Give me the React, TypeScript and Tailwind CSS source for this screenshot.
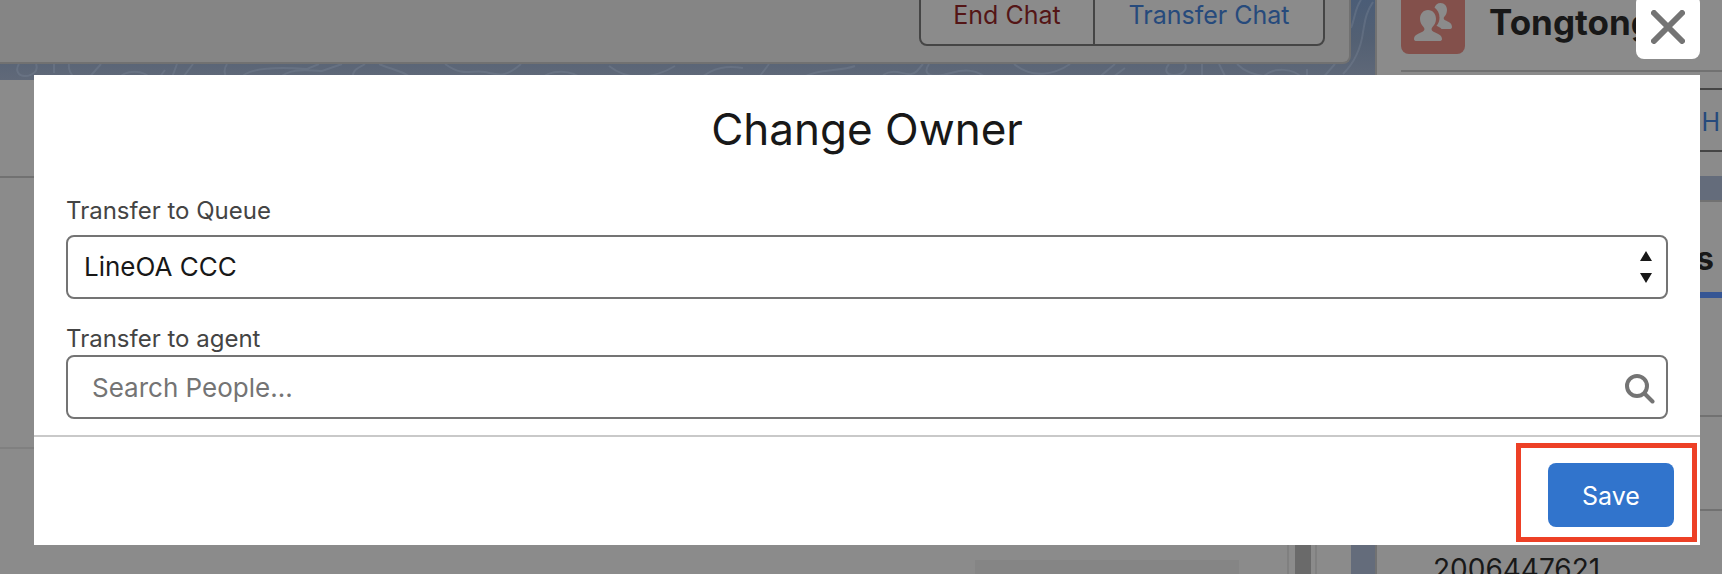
import React from "react";

function Contours() {
  return (
    <svg
      className="absolute inset-0 h-full w-full"
      viewBox="0 0 1376 80"
      preserveAspectRatio="xMaxYMin slice"
      fill="none"
      stroke="#7b8697"
      strokeOpacity="0.35"
      strokeWidth="2"
      aria-hidden="true"
    >
      <path d="M20 64c-4 6-1 12 6 12s14-5 11-12M55 64v9M70 64c-1 6 2 10 6 15M88 80l14-16M118 80c8-11 27-11 35 0M160 78l6-8M172 80l6-16M182 80l12-16M228 64c-4 6-3 11 1 16M240 80c6-11 30-14 68-11l12-5M278 80c12-12 27-10 45-9l20-7M355 80c-4-10 5-12 11-16M380 64c14 6 28 8 34 16" />
      <path d="M446 64c20 14 26 5 40 8s20 6 36-8M540 80c12-12 34-10 44 0M610 66c20 16 46 12 66 0M700 80c14-14 30-14 44-12M770 64l-12 16M800 80c16-12 40-8 56-14" />
      <path d="M884 75c14-9 26 5 34-4l6-7M930 64c-8 12 4 14 22 9 14-4 26-4 38 7M1015 64c18 15 40 11 56 0M1098 79l18-15M1110 80l16-12M1170 64c-5 6-3 11 5 11s14-5 11-11M1203 64v12M1220 64l6 12M1238 64c12 12 24 10 40 16M1265 76c10-9 30-8 38 2M1308 69v10M1322 80l14-16" />
      <path d="M1374 2c-8 12-8 20-10 30-2 16-8 30-20 42M1362 0c-6 8-6 18-10 28" />
    </svg>
  );
}

function PeopleIcon() {
  return (
    <svg viewBox="0 0 64 64" className="h-16 w-16" fill="#8b8b8b" aria-hidden="true">
      <path d="M27 20c5 0 8 4 8 9 0 3-1.500 6-3.500 8-1.500 1.700-1.200 3.800 1 4.700 4.500 2 8.500 3.300 8.500 7.300 0 1.500-1 2-2.500 2h-23c-1.500 0-2.500-.5-2.500-2 0-4 4-5.300 8.500-7.300 2.200-.9 2.500-3 1-4.700-2-2-3.500-5-3.500-8 0-5 3-9 8-9Z" />
      <path d="M39.500 13c4 0 6.500 3 6.500 7 0 2.500-1 5-2.500 6.500-1.200 1.300-1 3 .6 3.700 3.500 1.600 6.900 2.800 6.900 6.800 0 1.500-1 2-2.500 2h-8c-1-1.500-3-2.500-5-3.300 2-2.200 3-5 3-8 0-4.500-2-8-5-10.200 1-2.700 3-4.500 6-4.500Z" />
    </svg>
  );
}

function Workspace() {
  return (
    <div className="flex h-screen overflow-hidden bg-[#646c7b] text-[#181818]" aria-hidden="true" inert>
      <div className="relative flex min-w-0 flex-1 flex-col pr-6">
        <div className="absolute inset-x-0 top-0 h-20 bg-linear-to-b from-[#4b5d77] via-[#536073] to-[#606979]">
          <Contours />
        </div>
        <header className="relative flex h-16 shrink-0 items-end justify-end rounded-br-lg border-r-2 border-b-2 border-[#717171] bg-[#858585] pr-6 pb-4">
          <div className="flex h-16 shrink-0 rounded-lg border-2 border-[#454545] bg-[#8b8b8b] text-[25px] leading-8">
            <button className="w-[174px] border-r-2 border-[#454545] pt-0.5 text-[#541516]">End Chat</button>
            <button className="w-[228px] pt-0.5 text-[#264a7c]">Transfer Chat</button>
          </div>
        </header>
        <div className="relative mt-4 flex min-h-0 flex-1 bg-[#8b8b8b]">
          <div className="flex min-w-0 flex-1 flex-col">
            <div className="h-[98px] shrink-0 border-b-2 border-[#717171]" />
            <div className="h-[271px] shrink-0 border-b-2 border-[#808080]" />
            <div className="flex flex-1 items-end justify-end pr-12">
              <div className="h-3.5 w-[264px] bg-[#858585]" />
            </div>
          </div>
          <div className="flex w-[30px] border-x-2 border-[#808080] pr-1 pl-1.5">
            <div className="flex-1 bg-[#6a6a6a]" />
          </div>
          <div className="w-[34px]" />
        </div>
      </div>
      <aside className="flex w-[347px] shrink-0 flex-col border-l-2 border-[#727272]">
        <div className="h-44 shrink-0 bg-[#8b8b8b] pl-6">
          <div className="flex h-[72px] items-end gap-6 border-b-2 border-[#717171] pb-4">
            <div className="h-16 w-16 shrink-0 rounded-lg bg-[#83504b]">
              <PeopleIcon />
            </div>
            <h2 className="pb-2.5 text-[35px] leading-[44px] font-bold">Tongtong</h2>
          </div>
          <div className="mt-4 flex h-16 items-center justify-end border-y-2 border-[#454545] pt-1 pr-0.5 text-[25px] leading-8 text-[#264a7c]">
            <button>H</button>
          </div>
        </div>
        <div className="mt-6 flex flex-1 flex-col border-t-2 border-[#717171] bg-[#8b8b8b]">
          <div className="flex h-24 shrink-0 items-center justify-end border-b-[6px] border-[#365694] pt-6 pr-2 text-[32px] leading-10 font-bold">
            Details
          </div>
          <div className="h-[119px] shrink-0 border-b-2 border-[#717171]" />
          <div className="h-[94px] shrink-0 border-b-2 border-[#717171]" />
          <div className="shrink-0 pt-10 pl-14 text-[28px] leading-9">2006447621</div>
        </div>
      </aside>
    </div>
  );
}

export default function App() {
  return (
    <div className="relative h-screen overflow-hidden font-['Inter',sans-serif]">
      <Workspace />
      <div className="absolute inset-0 pt-[75px] pr-[22px] pl-[34px]">
        <section role="dialog" aria-modal="true" aria-labelledby="dialog-title" className="relative bg-white">
          <button
            aria-label="Close"
            className="absolute right-0 -top-20 flex h-16 w-16 items-center justify-center rounded-lg bg-white"
          >
            <svg viewBox="0 0 34 34" className="h-[34px] w-[34px]" stroke="#747474" strokeWidth="6" strokeLinecap="round" aria-hidden="true">
              <path d="M3 3l28 28M31 3L3 31" />
            </svg>
          </button>
          <h1 id="dialog-title" className="pt-6 text-center text-[44px] leading-[60px] text-[#181818]">
            Change Owner
          </h1>
          <form className="pt-9" onSubmit={(e) => e.preventDefault()}>
            <div className="px-8">
              <label htmlFor="queue" className="block text-[24px] leading-8 text-[#444444]">
                Transfer to Queue
              </label>
              <div className="relative mt-2">
                <select
                  id="queue"
                  className="block h-16 w-full appearance-none rounded-lg border-2 border-[#747474] bg-white px-4 text-[26px] leading-9 text-[#181818]"
                >
                  <option>LineOA CCC</option>
                </select>
                <svg viewBox="0 0 12 32" className="pointer-events-none absolute top-4 right-4 h-8 w-3" fill="#181818" aria-hidden="true">
                  <path d="M6 0l6 10H0zM0 22h12L6 32z" />
                </svg>
              </div>
              <label htmlFor="agent" className="mt-6 block text-[24px] leading-8 text-[#444444]">
                Transfer to agent
              </label>
              <div className="relative">
                <input
                  id="agent"
                  type="text"
                  placeholder="Search People..."
                  className="block h-16 w-full rounded-lg border-2 border-[#747474] bg-white pr-14 pl-6 text-[26px] leading-9 placeholder:text-[#747474]"
                />
                <svg viewBox="0 0 30 30" className="pointer-events-none absolute top-[19px] right-[13px] h-[30px] w-[30px]" fill="none" stroke="#747474" strokeLinecap="round" aria-hidden="true">
                  <circle cx="12" cy="12" r="10" strokeWidth="4" />
                  <path d="M20 20l7.500 7.500" strokeWidth="4" />
                </svg>
              </div>
            </div>
            <footer className="relative mt-4 flex justify-end border-t-2 border-[#c9c9c9] pt-[26px] pr-[26px] pb-[18px]">
              <button type="submit" className="h-16 w-[126px] rounded-lg bg-[#3174cc] pt-0.5 text-[25px] leading-8 text-white">
                Save
              </button>
              <div className="pointer-events-none absolute top-1.5 right-[3px] h-[99px] w-[181px] border-[5px] border-[#ed4026]" />
            </footer>
          </form>
        </section>
      </div>
    </div>
  );
}
